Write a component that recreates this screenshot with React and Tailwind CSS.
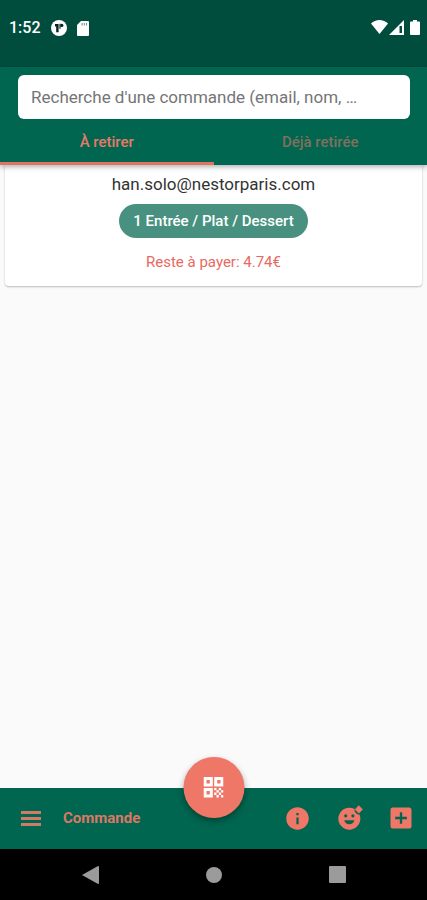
import React, { useState } from 'react';
import { MdInfo, MdAddBox } from 'react-icons/md';

const tabs = [
    { id: 'todo', label: 'À retirer' },
    { id: 'done', label: 'Déjà retirée' },
];

const orders = [
    { id: 1, email: 'han.solo@nestorparis.com', menu: '1 Entrée / Plat / Dessert', due: '4.74€', status: 'todo' },
];

const StatusBar = () => (
    <div className="h-[67px] bg-[#004d3e] pl-[9px] pr-[7px] flex items-start justify-between text-white">
        <div className="h-14 flex items-center">
            <span className="text-[16px] font-medium mr-[10px]">1:52</span>
            <svg viewBox="0 0 16 16" className="size-4 mr-[10px]" aria-hidden="true">
                <circle cx="8" cy="8" r="8" fill="#fff" />
                <path d="M4 4h3.600v8.200H5.200V6.500H4z" fill="#00261e" />
                <path d="M8.400 3.800h1.200v5H8.400z" fill="#00261e" />
                <circle cx="10.800" cy="5.400" r="1.600" fill="#00261e" />
            </svg>
            <svg viewBox="0 0 12 15" className="w-3 h-[15px]" aria-hidden="true">
                <path d="M4 0h7a1 1 0 0 1 1 1v13a1 1 0 0 1-1 1H1a1 1 0 0 1-1-1V4z" fill="#fff" />
                <path d="M4.600 2h1v2.500h-1zM6.800 2h1v2.500h-1zM9 2h1v2.500H9z" fill="#6d9188" />
            </svg>
        </div>
        <div className="h-[54px] flex items-center">
            <svg viewBox="0 0 17 14" className="w-[17px] h-[14px]" aria-hidden="true">
                <path d="M8.500 14 0 3.600C2.400 1.200 5.300 0 8.500 0S14.600 1.200 17 3.600z" fill="#fff" />
            </svg>
            <svg viewBox="0 0 15 15" className="size-[15px] ml-px mr-[6px]" aria-hidden="true">
                <path d="M0 15 15 0v15z" fill="#fff" />
                <path d="M10.500 6h2.500v7h-2.500z" fill="#004d3e" />
            </svg>
            <svg viewBox="0 0 10 15" className="w-[10px] h-[15px]" aria-hidden="true">
                <path d="M3 0h4v1.500h2a1 1 0 0 1 1 1V14a1 1 0 0 1-1 1H1a1 1 0 0 1-1-1V2.500a1 1 0 0 1 1-1h2z" fill="#fff" />
            </svg>
        </div>
    </div>
);

const OrderCard = ({ order }) => (
    <article className="mx-[5px] bg-white rounded-b-sm shadow-[0_1px_2px_rgba(0,0,0,0.25)] flex flex-col items-center pt-[7px] pb-3">
        <h2 className="text-[17px] leading-6 text-[#333333]">{order.email}</h2>
        <span className="mt-2 h-[34px] px-[14px] rounded-full bg-[#489180] text-white text-[15px] font-medium flex items-center">
            {order.menu}
        </span>
        <p className="mt-3 text-[15px] leading-6 text-[#e8695f]">Reste à payer: {order.due}</p>
    </article>
);

const MenuIcon = () => (
    <svg viewBox="0 0 20 15" className="w-5 h-[15px]" fill="currentColor" aria-hidden="true">
        <path d="M0 0h20v3H0zM0 6h20v3H0zM0 12h20v3H0z" />
    </svg>
);

const QrIcon = () => (
    <svg viewBox="0 0 20 21" className="w-5 h-[21px]" fill="#fff" aria-hidden="true">
        <path fillRule="evenodd" d="M0 0h9.300v9.500H0zM3 3v3.500h3.300V3zM10.700 0H20v9.500h-9.300zM13.700 3v3.500H17V3zM0 11h9.300v9.500H0zM3 14v3.500h3.300V14z" />
        <path d="M10.700 11h2.300v2.300h-2.300zM15.300 11h2.300v2.300h-2.300zM13 13.300h2.300v2.300H13zM17.600 13.300H20v2.300h-2.400zM10.700 15.600H13v2.300h-2.300zM15.300 15.600h2.300v2.300h-2.300zM13 17.900h2.300v2.600H13zM17.600 17.900H20v2.600h-2.400z" />
    </svg>
);

const ReactionIcon = () => (
    <svg viewBox="0 0 26 26" className="size-[26px]" fill="currentColor" aria-hidden="true">
        <path
            fillRule="evenodd"
            d="M17.500 4A11 11 0 1 0 22.500 9.500C19.800 9.600 17.400 7.400 17.500 4zM8.700 9.200a1.600 1.600 0 1 1 0 3.200 1.600 1.600 0 0 1 0-3.200zM15.900 9.200a1.600 1.600 0 1 1 0 3.200 1.600 1.600 0 0 1 0-3.200zM7.200 15.200h10.200c-.7 2.400-2.700 4-5.100 4s-4.400-1.600-5.100-4z"
        />
        <path d="M21.800.6 25.600 4.400l-3.800 3.800L18 4.400z" stroke="currentColor" strokeWidth="0.500" strokeLinejoin="round" />
    </svg>
);

const BottomBar = () => (
    <nav className="relative h-[61px] bg-[#00664f] pl-[21px] pr-3 flex items-center justify-between text-[#ee7768]">
        <div className="flex items-center gap-[22px]">
            <button type="button" aria-label="Menu" className="text-[#cf7b68]">
                <MenuIcon />
            </button>
            <span className="text-[15px] font-bold text-[#dc7766]">Commande</span>
        </div>
        <div className="flex items-center pb-px">
            <button type="button" aria-label="Informations" className="mr-[26px]">
                <MdInfo size={27} />
            </button>
            <button type="button" aria-label="Réactions" className="mr-6">
                <ReactionIcon />
            </button>
            <button type="button" aria-label="Ajouter">
                <MdAddBox size={28} />
            </button>
        </div>
        {/* Scan button sits half over the bar */}
        <button
            type="button"
            aria-label="Scanner un QR code"
            className="absolute left-1/2 -top-[31px] -translate-x-1/2 size-[61px] rounded-full bg-[#ef7768] shadow-[0_3px_6px_rgba(0,0,0,0.35)] flex items-center justify-center"
        >
            <QrIcon />
        </button>
    </nav>
);

const SystemBar = () => (
    <div className="h-[51px] bg-black flex items-center justify-around px-7 text-[#9b9b9b]">
        <button type="button" aria-label="Retour">
            <svg viewBox="0 0 17 18" className="w-[17px] h-[18px]" fill="currentColor">
                <path d="M0 9 16 0q1 0 1 1v16q0 1-1 1z" />
            </svg>
        </button>
        <button type="button" aria-label="Accueil" className="size-4 rounded-full bg-[#9b9b9b]" />
        <button type="button" aria-label="Applications récentes" className="size-[17px] rounded-[1px] bg-[#9b9b9b]" />
    </div>
);

const App = () => {
    const [activeTab, setActiveTab] = useState('todo');
    const [search, setSearch] = useState('');

    const visibleOrders = orders.filter((order) => order.status === activeTab && order.email.includes(search));

    return (
        <div className="min-h-screen flex flex-col bg-[#fafafa] font-[Roboto,sans-serif]">
            <StatusBar />

            {/* Search + tabs */}
            <header className="relative bg-[#00664f] pt-2 shadow-[0_2px_5px_rgba(0,0,0,0.3)]">
                <div className="pl-[18px] pr-[17px]">
                    <input
                        type="text"
                        aria-label="Recherche"
                        value={search}
                        onChange={(e) => setSearch(e.target.value)}
                        placeholder="Recherche d'une commande (email, nom, …"
                        className="block w-full h-11 px-[13px] rounded-md bg-white text-[17px] text-[#333333] placeholder:text-[#757575] outline-none"
                    />
                </div>
                <div role="tablist" className="flex">
                    {tabs.map((tab) => (
                        <button
                            key={tab.id}
                            type="button"
                            role="tab"
                            aria-selected={activeTab === tab.id}
                            onClick={() => setActiveTab(tab.id)}
                            className={`flex-1 h-[46px] pt-[3px] border-b-3 text-[15px] font-medium ${
                                activeTab === tab.id ? 'border-[#e0755f] text-[#e97a68]' : 'border-transparent text-[#80705c]'
                            }`}
                        >
                            {tab.label}
                        </button>
                    ))}
                </div>
            </header>

            <main className="flex-1">
                {visibleOrders.map((order) => (
                    <OrderCard key={order.id} order={order} />
                ))}
            </main>

            <BottomBar />
            <SystemBar />
        </div>
    );
};

export default App;
